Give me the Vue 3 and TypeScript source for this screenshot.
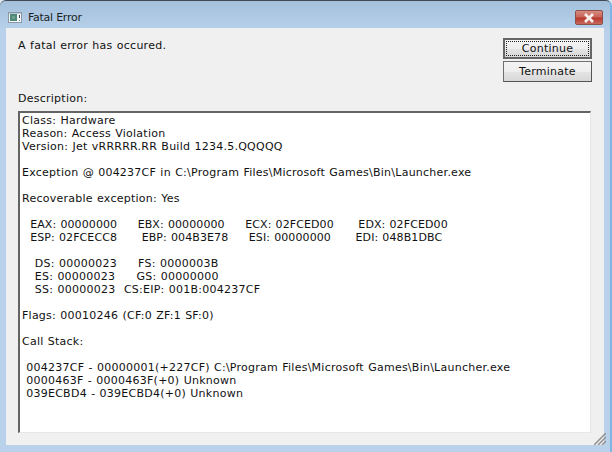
<script setup lang="ts">
const head = `Class: Hardware
Reason: Access Violation
Version: Jet vRRRRR.RR Build 1234.5.QQQQQ

Exception @ 004237CF in C:\\Program Files\\Microsoft Games\\Bin\\Launcher.exe

Recoverable exception: Yes

`
const registers = `  EAX: 00000000     EBX: 00000000     ECX: 02FCED00      EDX: 02FCED00
  ESP: 02FCECC8      EBP: 004B3E78     ESI: 00000000      EDI: 048B1DBC`
const tail = `

   DS: 00000023     FS: 0000003B
   ES: 00000023     GS: 00000000
   SS: 00000023  CS:EIP: 001B:004237CF

Flags: 00010246 (CF:0 ZF:1 SF:0)

Call Stack:

 004237CF - 00000001(+227CF) C:\\Program Files\\Microsoft Games\\Bin\\Launcher.exe
 0000463F - 0000463F(+0) Unknown
 039ECBD4 - 039ECBD4(+0) Unknown`
</script>

<template>
  <div class="window">
    <header class="titlebar">
      <div class="title-left">
        <svg class="app-icon" width="14" height="11" viewBox="0 0 14 11">
          <rect x="0.5" y="0.5" width="13" height="10" fill="#f4f6f8" stroke="#8b98a5" />
          <rect x="1" y="1" width="12" height="1" fill="#b9c6d4" />
          <rect x="2" y="2" width="7" height="7" fill="#4f8a78" />
          <rect x="4" y="4" width="3" height="3" fill="#6fa08f" />
          <rect x="11" y="3" width="1" height="3" fill="#38424c" />
          <rect x="11" y="8" width="1" height="1" fill="#6d7f8c" />
        </svg>
        <span class="title">Fatal Error</span>
      </div>
      <button class="close" aria-label="Close">
        <svg width="14" height="10" viewBox="0 0 14 10">
          <path d="M3 1 L11 9 M11 1 L3 9" stroke="#f6ecea" stroke-width="2.8" fill="none" />
        </svg>
      </button>
    </header>
    <main class="client">
      <div class="top">
        <p class="message">A fatal error has occured.</p>
        <div class="actions">
          <button class="btn btn-default"><span class="focus">Continue</span></button>
          <button class="btn">Terminate</button>
        </div>
      </div>
      <label class="desc-label">Description:</label>
      <pre class="desc">{{ head }}<span class="regs">{{ registers }}</span>{{ tail }}</pre>
      <div class="grip-row">
        <svg width="12" height="12" viewBox="0 0 12 12">
          <path d="M0 12 L12 0 M4 12 L12 4 M8 12 L12 8" stroke="#8f8f8f" stroke-width="1.5" fill="none" />
        </svg>
      </div>
    </main>
  </div>
</template>

<style>
html, body { margin: 0; padding: 0; background: #dfe6ee; overflow: hidden; }
</style>

<style scoped>
.window {
  width: 612px;
  height: 452px;
  box-sizing: border-box;
  display: flex;
  flex-direction: column;
  padding: 0 6px 7px 6px;
  border-top: 1px solid #3f4a55;
  border-right: 2px solid #7db6e4;
  border-radius: 6px 6px 0 0;
  background: linear-gradient(180deg, #a3c0dc 0, #b9d1ea 30px);
  font-family: "DejaVu Sans", sans-serif;
  font-size: 11px;
  color: #111;
}
.titlebar {
  height: 27px;
  box-sizing: border-box;
  flex: none;
  display: flex;
  align-items: center;
  justify-content: space-between;
  padding: 6px 1px 0 2px;
}
.title-left { display: flex; align-items: center; gap: 6px; }
.app-icon { display: block; }
.title { font-size: 11px; letter-spacing: -0.25px; color: #1a1f26; }
.close {
  width: 28px;
  height: 15px;
  padding: 0;
  margin: 0;
  display: flex;
  align-items: center;
  justify-content: center;
  border: 1px solid #8d4f4a;
  border-radius: 2px;
  background: linear-gradient(180deg, #d78b80 0, #c9645a 45%, #b8372c 55%, #c76a5e 100%);
}
.client {
  flex: 1;
  min-height: 0;
  display: flex;
  flex-direction: column;
  background: #f0f0f0;
  padding: 10px 0 0 12px;
  position: relative;
}
.top {
  display: flex;
  justify-content: space-between;
  align-items: flex-start;
  height: 54px;
  padding-right: 12px;
}
.message { margin: 1px 0 0; line-height: 14px; letter-spacing: 0.25px; word-spacing: 0.5px; }
.actions { display: flex; flex-direction: column; gap: 2px; }
.btn {
  width: 89px;
  height: 21px;
  padding: 0;
  box-sizing: border-box;
  font: inherit;
  color: #111;
  letter-spacing: 0.25px;
  background: linear-gradient(180deg, #f4f4f4 0, #eeeeee 50%, #e4e4e4 51%, #d8d8d8 100%);
  border: 1px solid #707070;
  border-right-color: #555;
  border-bottom-color: #555;
  display: flex;
  align-items: center;
  justify-content: center;
}
.btn-default { border-width: 2px; border-color: #666; padding: 1px; }
.focus {
  flex: 1;
  align-self: stretch;
  display: flex;
  align-items: center;
  justify-content: center;
  border: 1px dotted #222;
}
.desc-label { line-height: 14px; letter-spacing: 0.25px; }
.desc {
  margin: 5px 0 0;
  width: 573px;
  height: 322px;
  flex: none;
  box-sizing: border-box;
  overflow: hidden;
  background: #fff;
  border: 1px solid #e6e6e6;
  border-top: 2px solid #646464;
  border-left: 2px solid #646464;
  padding: 1px 0 0 2px;
  font-family: "DejaVu Sans", sans-serif;
  font-size: 11px;
  line-height: 13px;
  letter-spacing: 0.25px;
  word-spacing: 0.5px;
  color: #111;
}
.regs { letter-spacing: 0.1px; }
.grip-row {
  position: absolute;
  right: -2px;
  bottom: 0;
  line-height: 0;
}
</style>
